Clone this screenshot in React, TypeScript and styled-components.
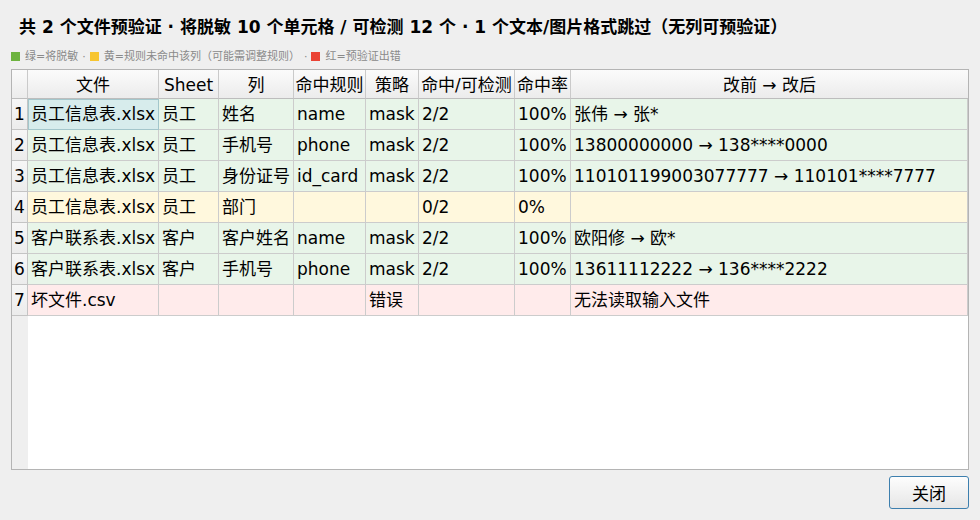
import styled, { createGlobalStyle } from "styled-components";

const GlobalStyle = createGlobalStyle`
  html, body {
    margin: 0;
    padding: 0;
    background: #efefef;
  }
  body {
    font-family: "DejaVu Sans", "Noto Sans CJK SC", sans-serif;
    color: #000;
  }
`;

type Tone = "green" | "yellow" | "red";

const toneBg: Record<Tone, string> = {
  green: "#e8f5e9",
  yellow: "#fff8dd",
  red: "#ffebeb",
};

const COLS = [16, 131, 60, 75, 72, 53, 96, 56, 397];
const gridCols = COLS.map((w) => `${w}px`).join(" ");

const Window = styled.div`
  width: 980px;
  height: 520px;
  display: flex;
  flex-direction: column;
  padding: 15px 11px 0 11px;
  box-sizing: border-box;
`;

const Title = styled.div`
  font-size: 17px;
  font-weight: bold;
  line-height: 24px;
  padding-left: 8px;
  white-space: nowrap;
`;

const Legend = styled.div`
  margin-top: 11px;
  font-size: 11px;
  line-height: 13px;
  color: #8a8a8a;
  display: flex;
  align-items: center;
  white-space: nowrap;
`;

const Swatch = styled.span<{ color: string }>`
  display: inline-block;
  width: 9px;
  height: 9px;
  background: ${(p) => p.color};
  margin-right: 5px;
`;

const Sep = styled.span`
  margin: 0 4px;
`;

const Frame = styled.div`
  margin-top: 6px;
  height: 401px;
  box-sizing: border-box;
  border: 1px solid #b4b4b4;
  background: #fff;
  display: flex;
  flex-direction: column;
  overflow: hidden;
`;

const HeaderRow = styled.div`
  display: grid;
  grid-template-columns: ${gridCols};
  grid-template-rows: 29px;
  background: linear-gradient(#fbfbfb, #ebebeb);
`;

const HeadCell = styled.div`
  box-sizing: border-box;
  border-right: 1px solid #cacaca;
  border-bottom: 1px solid #bdbdbd;
  font-size: 17px;
  line-height: 26px;
  padding-top: 2px;
  text-align: center;
  white-space: nowrap;
  overflow: hidden;
  &:last-child {
    border-right: none;
  }
`;

const Row = styled.div`
  display: grid;
  grid-template-columns: ${gridCols};
  grid-template-rows: 31px;
`;

const RowHead = styled.div`
  box-sizing: border-box;
  background: linear-gradient(#f6f6f6, #ececec);
  border-right: 1px solid #c4c4c4;
  border-bottom: 1px solid #c4c4c4;
  font-size: 17px;
  line-height: 30px;
  text-align: center;
`;

const Cell = styled.div<{ tone: Tone; selected?: boolean }>`
  box-sizing: border-box;
  background: ${(p) => (p.selected ? "#d7ecec" : toneBg[p.tone])};
  border-right: 1px solid #cccccc;
  border-bottom: 1px solid #cccccc;
  ${(p) => p.selected && "outline: 1px solid #a3c6cb; outline-offset: -1px;"}
  font-size: 17px;
  line-height: 29px;
  padding: 1px 0 0 3px;
  white-space: nowrap;
  overflow: hidden;
`;

const Filler = styled.div`
  flex: 1;
  display: grid;
  grid-template-columns: 16px 1fr;
`;

const FillerHead = styled.div`
  background: #efefef;
`;

const Footer = styled.div`
  display: flex;
  justify-content: flex-end;
  padding-top: 6px;
`;

const Button = styled.button`
  width: 80px;
  height: 33px;
  box-sizing: border-box;
  border: 1px solid #3d7fae;
  border-radius: 3px;
  background: linear-gradient(#fdfdfd, #e6e6e6);
  font-family: "DejaVu Sans", "Noto Sans CJK SC", sans-serif;
  font-size: 17px;
  color: #000;
  padding: 0;
`;

const headers = ["", "文件", "Sheet", "列", "命中规则", "策略", "命中/可检测", "命中率", "改前 → 改后"];

const rows: { tone: Tone; cells: string[] }[] = [
  { tone: "green", cells: ["员工信息表.xlsx", "员工", "姓名", "name", "mask", "2/2", "100%", "张伟 → 张*"] },
  { tone: "green", cells: ["员工信息表.xlsx", "员工", "手机号", "phone", "mask", "2/2", "100%", "13800000000 → 138****0000"] },
  { tone: "green", cells: ["员工信息表.xlsx", "员工", "身份证号", "id_card", "mask", "2/2", "100%", "110101199003077777 → 110101****7777"] },
  { tone: "yellow", cells: ["员工信息表.xlsx", "员工", "部门", "", "", "0/2", "0%", ""] },
  { tone: "green", cells: ["客户联系表.xlsx", "客户", "客户姓名", "name", "mask", "2/2", "100%", "欧阳修 → 欧*"] },
  { tone: "green", cells: ["客户联系表.xlsx", "客户", "手机号", "phone", "mask", "2/2", "100%", "13611112222 → 136****2222"] },
  { tone: "red", cells: ["坏文件.csv", "", "", "", "错误", "", "", "无法读取输入文件"] },
];

export default function App() {
  return (
    <>
      <GlobalStyle />
      <Window>
        <Title>
          共 2 个文件预验证 · 将脱敏 10 个单元格 / 可检测 12 个 · 1 个文本/图片格式跳过（无列可预验证）
        </Title>
        <Legend>
          <Swatch color="#6db33f" />
          绿=将脱敏<Sep>·</Sep>
          <Swatch color="#f7c530" />
          黄=规则未命中该列（可能需调整规则）<Sep>·</Sep>
          <Swatch color="#ea4335" />
          红=预验证出错
        </Legend>
        <Frame>
          <HeaderRow>
            {headers.map((h, i) => (
              <HeadCell key={i}>{h}</HeadCell>
            ))}
          </HeaderRow>
          {rows.map((r, ri) => (
            <Row key={ri}>
              <RowHead>{ri + 1}</RowHead>
              {r.cells.map((c, ci) => (
                <Cell key={ci} tone={r.tone} selected={ri === 0 && ci === 0}>
                  {c}
                </Cell>
              ))}
            </Row>
          ))}
          <Filler>
            <FillerHead />
            <div />
          </Filler>
        </Frame>
        <Footer>
          <Button>关闭</Button>
        </Footer>
      </Window>
    </>
  );
}
